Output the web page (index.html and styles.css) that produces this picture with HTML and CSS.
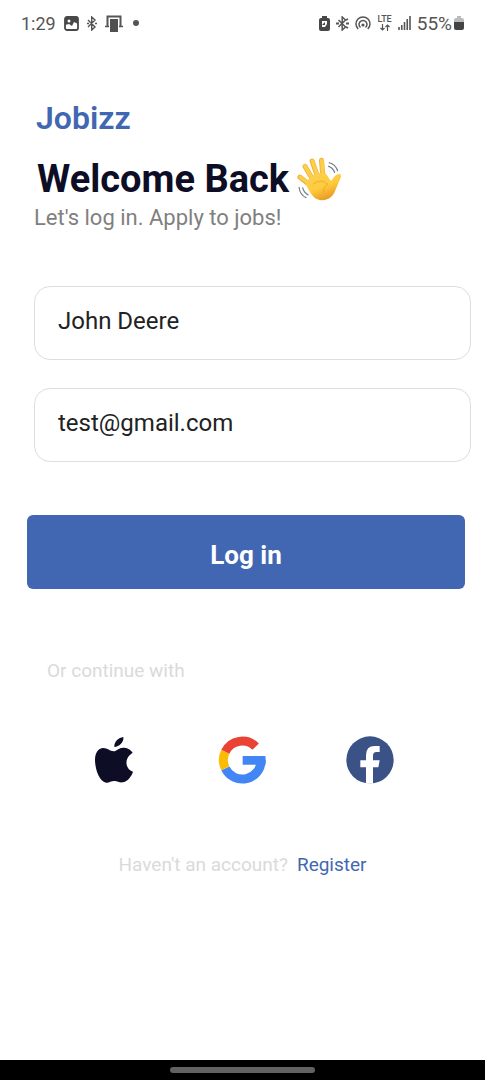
FILE: index.html
```html
<!DOCTYPE html>
<html lang="en">
<head>
<meta charset="utf-8">
<meta name="viewport" content="width=device-width, initial-scale=1">
<title>Jobizz</title>
<link rel="stylesheet" href="styles.css">
</head>
<body>
<header class="status">
  <div class="status-group">
    <span class="clock">1:29</span>
    <svg class="gallery" width="15" height="15" viewBox="0 0 15 15" aria-hidden="true"><rect x="1" y="1" width="13" height="13" rx="2" fill="none" stroke="#484848" stroke-width="1.800"/><path d="M1 2h13v6l-4-2-2 4-3-2-4 1z" fill="#484848"/><circle cx="5" cy="5" r="1.500" fill="#fff"/></svg>
    <svg class="bluetooth" width="10" height="15" viewBox="0 0 10 15" aria-hidden="true"><path d="M1 4l7 7-3.300 3V1L8 4l-7 7M0 7.500h2M8 7.500h2" fill="none" stroke="#555" stroke-width="1.400"/></svg>
    <svg width="18" height="17" viewBox="0 0 18 17" aria-hidden="true"><path d="M2.500 11V1.500h13V11" fill="none" stroke="#555" stroke-width="2"/><path d="M5 4h8v13H5z" fill="#505050"/><path d="M0 11.500h4M14 11.500h4" stroke="#555" stroke-width="1.500"/></svg>
    <span class="dot"></span>
  </div>
  <div class="status-group status-right">
    <svg width="11" height="15" viewBox="0 0 11 15" aria-hidden="true"><path d="M3 0h5v2h1a2 2 0 0 1 2 2v9a2 2 0 0 1-2 2H2a2 2 0 0 1-2-2V4a2 2 0 0 1 2-2h1z" fill="#484848"/><path d="M3 5h5v3l-2 3H3z" fill="#fff"/><path d="M3 9l3-3v3z" fill="#484848"/></svg>
    <svg width="13" height="15" viewBox="0 0 13 15" aria-hidden="true"><path d="M2.500 4l7 7-3.300 3V1l3.300 3-7 7" fill="none" stroke="#555" stroke-width="1.500"/><path d="M0 7.500h3M10 7.500h3M10 4l2-1M10 11l2 1" stroke="#555" stroke-width="1.800"/></svg>
    <svg width="16" height="15" viewBox="0 0 16 15" aria-hidden="true"><g fill="none" stroke="#555" stroke-width="1.500"><path d="M3.200 13a7 7 0 1 1 9.600 0"/><path d="M5.500 11.500a4 4 0 1 1 5 0"/></g><circle cx="8" cy="9" r="1.600" fill="#555"/></svg>
    <span class="lte"><span>LTE</span><svg width="10" height="7" viewBox="0 0 10 7" aria-hidden="true"><path d="M2.500 0v6M.5 4l2 2 2-2M7.500 7V1M5.500 3l2-2 2 2" fill="none" stroke="#555" stroke-width="1.200"/></svg></span>
    <svg width="13" height="14" viewBox="0 0 13 14" aria-hidden="true"><path d="M1 14v-3M3.750 14V9M6.500 14V6M9.250 14V3M12 14V0" stroke="#555" stroke-width="1.600"/></svg>
    <span class="charge"><span class="percent">55%</span><svg width="10" height="14" viewBox="0 0 10 14" aria-hidden="true"><path d="M0 6V4a2 2 0 0 1 2-2h1V0h4v2h1a2 2 0 0 1 2 2v2z" fill="#bbb"/><path d="M0 6h10v6a2 2 0 0 1-2 2H2a2 2 0 0 1-2-2z" fill="#444"/></svg></span>
  </div>
</header>
<main class="page">
  <div class="brand">Jobizz</div>
  <h1 class="title">Welcome Back
    <svg width="46" height="46" viewBox="33 33 137 137" role="img" aria-label="Waving hand">
      <defs>
        <linearGradient id="skin" x1="0" y1="0" x2="0.5" y2="1"><stop offset="0" stop-color="#fbd052"/><stop offset="0.6" stop-color="#ffcb3d"/><stop offset="1" stop-color="#e99b26"/></linearGradient>
      </defs>
      <path d="M80 103L57 64M94 94L78 48M110 94L106 46M70 118L42 96" stroke="#f0ad32" stroke-width="15" stroke-linecap="round"/>
      <path d="M79 101L57 63M94 93L79 48M110 92L107 46M70 116L43 96" stroke="#fdcd4c" stroke-width="11" stroke-linecap="round"/>
      <path d="M65 105L78 93Q90 82 103 84L117 84C125 91 127 101 134 107C143 99 144 89 157 87C164 86 166 93 163 98L145 140C136 161 112 169 94 162C79 156 70 137 60 119C57 112 60 106 65 105Z" fill="url(#skin)"/>
      <path d="M82 116Q105 98 124 117M123 116Q111 126 111 141" fill="none" stroke="#eba82f" stroke-width="2.500" stroke-linecap="round"/>
      <path d="M129 53Q147 57 154 77M127 64Q140 68 145 82M39 126Q42 149 60 157M50 128Q53 141 66 149" fill="none" stroke="#747b84" stroke-width="3.500" stroke-linecap="round"/>
    </svg>
  </h1>
  <p class="subtitle">Let's log in. Apply to jobs!</p>
  <form class="login">
    <input class="field" type="text" aria-label="Name" value="John Deere">
    <input class="field" type="email" aria-label="Email" value="test@gmail.com">
    <button class="submit" type="button">Log in</button>
  </form>
  <p class="alternative">Or continue with</p>
  <div class="providers">
    <button class="provider" type="button" aria-label="Continue with Apple"><svg width="48" height="48" viewBox="30 33 144 144" aria-hidden="true"><path fill="#0d0d26" d="M101 79C90 78 82 69 70 69C54 69 45 84 45 105C45 132 58 170 78 173C88 174 92 168 103 168C114 168 118 174 128 172C143 170 155 153 159 140C136 132 134 105 149 91Q153 86 158 83C151 72 140 68 129 68C117 68 109 79 101 79ZM103 66C102 50 115 38 130 36C132 51 119 65 103 66Z"/></svg></button>
    <button class="provider" type="button" aria-label="Continue with Google"><svg width="48" height="48" viewBox="24 32 144 144" aria-hidden="true"><g fill="none" stroke-width="27"><path stroke="#4285f4" d="M46 129A56.500 56.500 0 0 0 153.500 104"/><path stroke="#fbbc05" d="M46 79A56.500 56.500 0 0 0 46 129"/><path stroke="#ea4335" d="M137 64A56.500 56.500 0 0 0 46 79"/></g><path fill="#4285f4" d="M98 92H166Q168 104 166 118H98Z"/></svg></button>
    <button class="provider" type="button" aria-label="Continue with Facebook"><svg width="48" height="48" viewBox="36 32 144 144" aria-hidden="true"><circle cx="108" cy="104" r="71" fill="#3b5287"/><path fill="#fff" d="M96 175V126H79V105H96V90Q96 62 122 62H137V80H127Q117 80 117 91V105H137L133 126H117V175Z"/></svg></button>
  </div>
  <p class="signup">Haven't an account? <a class="register" href="#">Register</a></p>
</main>
<footer class="navigation"><span class="handle"></span></footer>
</body>
</html>
```
FILE: styles.css
```css
* { box-sizing: border-box; }
body {
  margin: 0;
  min-height: 100vh;
  display: flex;
  flex-direction: column;
  background: #fff;
  font-family: Roboto, sans-serif;
}
.status {
  height: 46px;
  padding: 0 21px 0 21px;
  display: flex;
  align-items: center;
  justify-content: space-between;
  color: #555;
  font-size: 18px;
}
.status-group { display: flex; align-items: center; gap: 8px; }
.status-right { gap: 6px; }
.dot { width: 6px; height: 6px; margin-left: 2px; border-radius: 50%; background: #555; }
.lte { display: flex; flex-direction: column; align-items: center; font-size: 9px; line-height: 9px; font-weight: 500; }
.charge { display: flex; align-items: center; gap: 2px; }
.percent { font-size: 19px; }
.page { flex: 1; padding: 52px 14px 0 34px; }
.brand { padding-left: 2px; color: #4267b2; font-size: 32px; line-height: 40px; font-weight: 600; }
.title {
  margin: 16px 0 0;
  padding-left: 3px;
  display: flex;
  align-items: center;
  gap: 8px;
  color: #0d0d26;
  font-size: 38px;
  line-height: 50px;
  font-weight: 700;
}
.subtitle { margin: 0; color: #808080; font-size: 22px; line-height: 28px; }
.login { margin-top: 54px; display: flex; flex-direction: column; gap: 28px; }
.field {
  width: 100%;
  height: 74px;
  padding: 0 23px 5px;
  border: 1px solid #ddd;
  border-radius: 16px;
  background: #fff;
  color: #222;
  font: 24px Roboto, sans-serif;
}
.submit {
  height: 74px;
  margin: 25px 6px 0 -7px;
  padding: 5px 0 0;
  border: 0;
  border-radius: 6px;
  background: #4267b2;
  color: #fff;
  font: 700 26px Roboto, sans-serif;
}
.alternative { margin: 70px 0 0; padding-left: 13px; color: #dadada; font-size: 19px; line-height: 24px; }
.providers { margin-top: 53px; padding-right: 21px; display: flex; justify-content: center; gap: 80px; }
.provider { width: 48px; height: 48px; padding: 0; border: 0; background: none; }
.provider svg { display: block; }
.signup { margin: 69px 0 0; padding-right: 20px; display: flex; justify-content: center; gap: 9px; color: #dadada; font-size: 19px; line-height: 24px; }
.register { color: #4267b2; text-decoration: none; }
.navigation { height: 20px; display: flex; align-items: center; justify-content: center; background: #000; }
.handle { width: 30%; height: 6px; border-radius: 3px; background: #626262; }
```
